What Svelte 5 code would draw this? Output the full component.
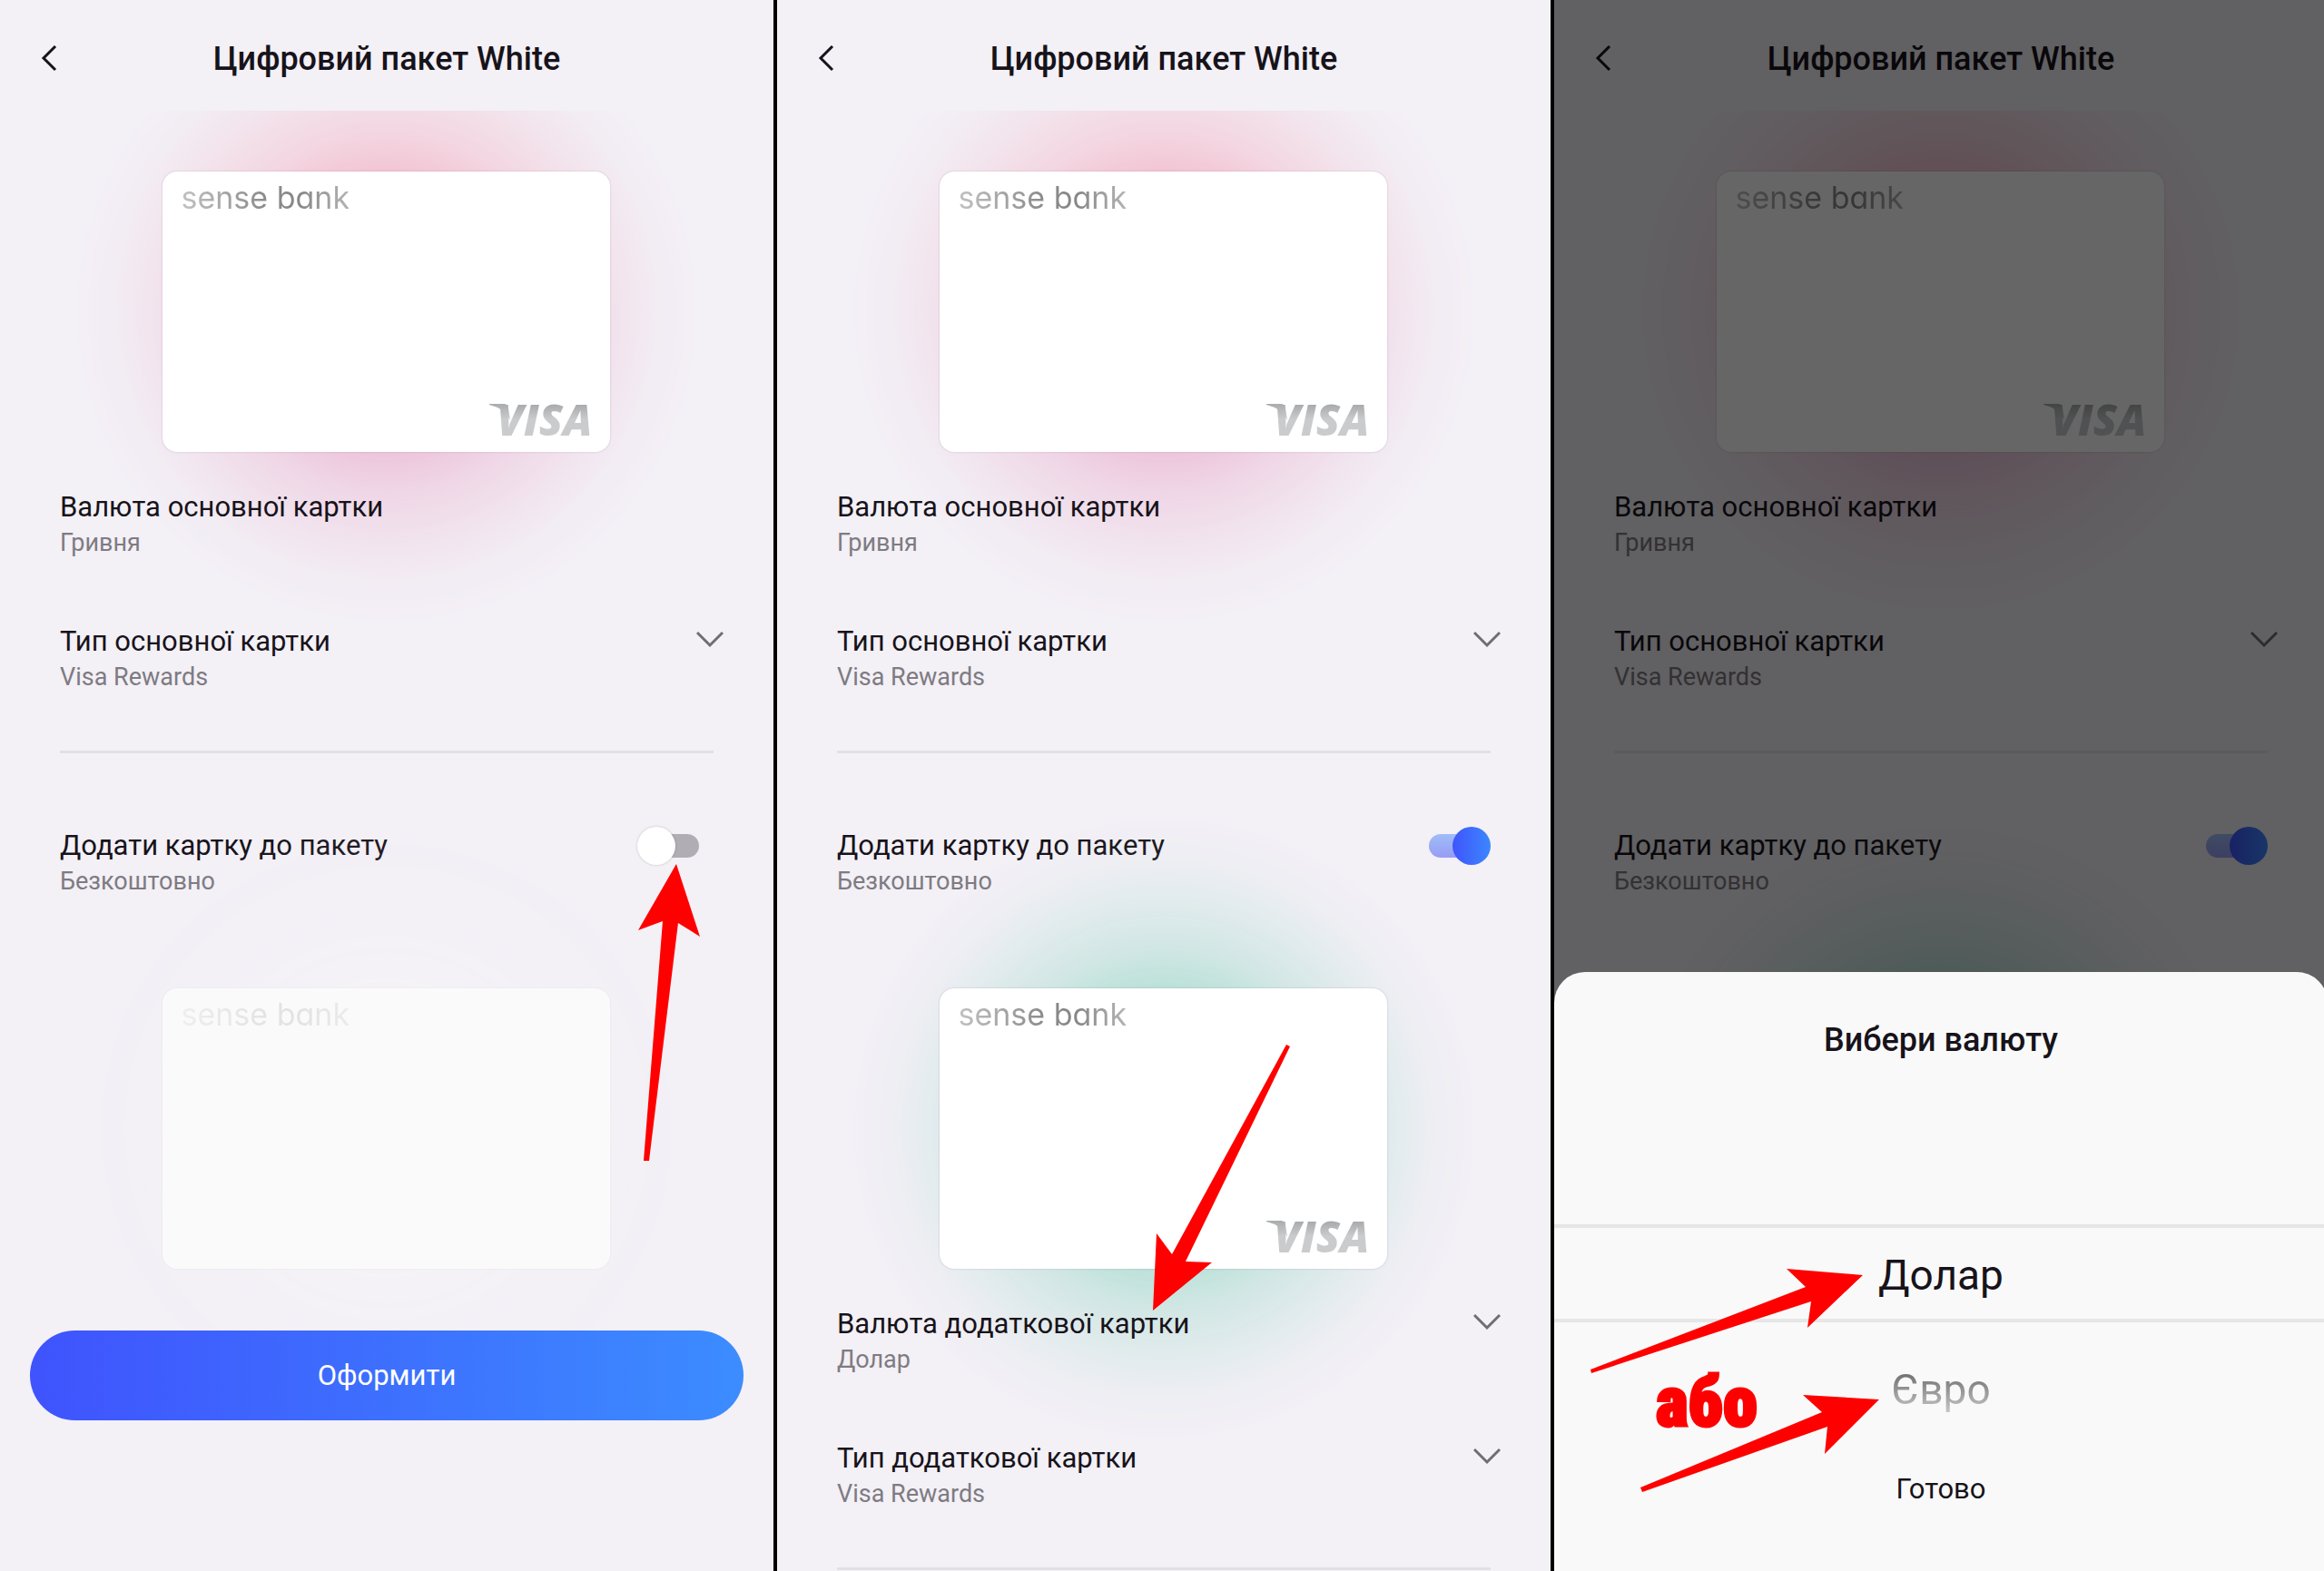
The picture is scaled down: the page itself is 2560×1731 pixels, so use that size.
<script>
  let panels = $state([
    { id: 'off', extra: false, sheet: false },
    { id: 'on', extra: true, sheet: false },
    { id: 'pick', extra: true, sheet: true }
  ]);

  const arrows = {
    off: ['745,952 771,1032 747,1017 715,1279 709,1279 730,1015 703,1025'],
    on: ['414,1444 418,1359 435,1382 561,1151 565,1153 450,1390 479,1391'],
    pick: [
      '340,1405 256,1398 277,1418 40,1509 41,1513 283,1434 279,1463',
      '358,1542 274,1537 295,1556 95,1639 97,1644 301,1572 298,1602'
    ]
  };
</script>

{#snippet bankCard(tone, disabled, covered)}
  <div class="stage">
    <div class="glow {tone}"></div>
    <div class="card" class:disabled>
      {#if !covered}
        <span class="brand">sense bank</span>
        {#if !disabled}
          <span class="visa">
            <svg class="wing" viewBox="0 0 24 20" aria-hidden="true">
              <path d="M0 0H16Q20 0 21 5L23 18Q17 5 0 1Z" fill="url(#silver)" />
            </svg>
            VISA
          </span>
        {/if}
      {/if}
    </div>
  </div>
{/snippet}

{#snippet choice(label, value)}
  <button class="row" type="button">
    <span class="text">
      <span class="label">{label}</span>
      <span class="value">{value}</span>
    </span>
    <svg class="chevron" viewBox="0 0 30 40" aria-hidden="true">
      <path d="M1 11L15 25L29 11" fill="none" stroke="currentColor" stroke-width="3" />
    </svg>
  </button>
{/snippet}

<svg class="defs" aria-hidden="true">
  <linearGradient id="silver" x1="0" y1="0" x2="0" y2="1">
    <stop offset="0" stop-color="#a9abad" />
    <stop offset="1" stop-color="#cdcfd1" />
  </linearGradient>
</svg>

<main class="page">
  {#each panels as panel (panel.id)}
    <section class="panel">
      <header class="top">
        <button class="back" type="button" aria-label="Назад">
          <svg viewBox="0 0 18 30" aria-hidden="true">
            <path d="M16 1L3 14L16 27" fill="none" stroke="currentColor" stroke-width="3" />
          </svg>
        </button>
        <h1>Цифровий пакет White</h1>
      </header>

      {@render bankCard('pink', false, false)}

      <div class="rows">
        <div class="row">
          <span class="text">
            <span class="label">Валюта основної картки</span>
            <span class="value">Гривня</span>
          </span>
        </div>
        {@render choice('Тип основної картки', 'Visa Rewards')}
      </div>
      <hr />
      <div class="row add">
        <label class="text" for="add-{panel.id}">
          <span class="label">Додати картку до пакету</span>
          <span class="value">Безкоштовно</span>
        </label>
        <input class="switch" id="add-{panel.id}" type="checkbox" bind:checked={panel.extra} />
      </div>

      <div class="second">
        {@render bankCard(panel.extra ? 'mint' : 'none', !panel.extra, panel.sheet)}
      </div>

      {#if panel.sheet}
        <div class="shade"></div>
        <div class="sheet" role="dialog" aria-labelledby="sheet-title">
          <h2 id="sheet-title">Вибери валюту</h2>
          <button class="option selected" type="button">Долар</button>
          <button class="option next" type="button">Євро</button>
          <button class="done" type="button">Готово</button>
        </div>
        <span class="or">або</span>
      {:else if panel.extra}
        <div class="rows">
          {@render choice('Валюта додаткової картки', 'Долар')}
          {@render choice('Тип додаткової картки', 'Visa Rewards')}
        </div>
        <hr />
      {:else}
        <button class="submit" type="button">Оформити</button>
      {/if}

      <svg class="arrows" viewBox="0 0 852 1731" aria-hidden="true">
        {#each arrows[panel.id] as points}
          <polygon {points} fill="#ff0000" />
        {/each}
      </svg>
    </section>
  {/each}
</main>

<style>
  :global(body) {
    margin: 0;
    background: #000;
  }
  .defs {
    position: absolute;
    width: 0;
    height: 0;
  }
  .page {
    display: grid;
    grid-template-columns: repeat(3, calc((100% - 4px) / 3));
    gap: 4px;
    min-height: 100vh;
    overflow: hidden;
    background: #000;
    font-family: Roboto, 'Noto Sans', sans-serif;
    color: #17131a;
  }
  .panel {
    position: relative;
    display: flex;
    flex-direction: column;
    overflow: hidden;
    background: #f3f0f6;
  }
  button {
    margin: 0;
    padding: 0;
    border: 0;
    background: none;
    font: inherit;
    color: inherit;
    cursor: pointer;
  }
  .top {
    position: relative;
    z-index: 1;
    display: grid;
    grid-template-columns: 63px 1fr 63px;
    align-items: center;
    height: 122px;
    padding: 8px 0 0;
    box-sizing: border-box;
    background: #f3f0f6;
  }
  .back {
    display: flex;
    justify-content: flex-end;
  }
  .back svg {
    width: 18px;
    height: 30px;
  }
  h1,
  h2 {
    margin: 0;
    font-size: 36px;
    line-height: 44px;
    font-weight: 500;
    text-align: center;
  }
  .stage {
    position: relative;
    display: flex;
    justify-content: center;
    padding: 67px 0 40px;
  }
  .second .stage {
    padding-top: 100px;
  }
  .glow {
    position: absolute;
    left: 50%;
    bottom: 40px;
    width: 720px;
    height: 720px;
    margin: 0 0 -205px -360px;
    mask-image: radial-gradient(
      circle,
      #000 0,
      rgb(0 0 0 / 0.9) 120px,
      rgb(0 0 0 / 0.75) 155px,
      rgb(0 0 0 / 0.45) 200px,
      rgb(0 0 0 / 0.24) 250px,
      rgb(0 0 0 / 0.06) 300px,
      transparent 345px
    );
    pointer-events: none;
  }
  .pink {
    background: linear-gradient(#f3b8c9 30%, #ebb7d3 70%);
  }
  .mint {
    background: #a9dccf;
  }
  .none {
    background: #f5f3f7;
  }
  .card {
    position: relative;
    display: flex;
    flex-direction: column;
    justify-content: space-between;
    width: 493px;
    height: 309px;
    padding: 9px 20px 10px;
    box-sizing: border-box;
    border-radius: 16px;
    background: #fff;
    box-shadow: 0 0 2px rgb(90 60 90 / 0.3);
  }
  .card.disabled {
    background: #fafafb;
    box-shadow: 0 0 2px rgb(90 60 90 / 0.1);
  }
  .brand {
    align-self: flex-start;
    font-family: Inter, Lato, sans-serif;
    font-feature-settings: 'cv11';
    font-size: 34px;
    line-height: 40px;
    font-weight: 400;
    background: linear-gradient(90deg, #c2c2c2, #8c8c8c 50%, #868686 70%, #b4b4b4);
    background-clip: text;
    color: transparent;
  }
  .disabled .brand {
    opacity: 0.2;
  }
  .visa {
    position: relative;
    align-self: flex-end;
    font-family: 'Open Sans', 'Noto Sans', sans-serif;
    font-size: 48px;
    line-height: 52px;
    font-weight: 800;
    font-style: italic;
    background: linear-gradient(#a9abad 20%, #c9cbcd 50%);
    background-clip: text;
    color: transparent;
  }
  .wing {
    position: absolute;
    left: -8px;
    top: 9px;
    width: 24px;
    height: 20px;
  }
  .rows {
    display: flex;
    flex-direction: column;
    gap: 70px;
  }
  .row {
    position: relative;
    display: flex;
    justify-content: space-between;
    align-items: flex-start;
    padding: 0 55px 0 66px;
    text-align: left;
  }
  .text {
    display: flex;
    flex-direction: column;
  }
  .label {
    font-size: 31px;
    line-height: 42px;
  }
  .value {
    font-size: 27px;
    line-height: 36px;
    color: #7e7b82;
  }
  .chevron {
    width: 30px;
    height: 40px;
    color: #6f6c73;
  }
  hr {
    width: auto;
    height: 3px;
    margin: 63px 66px 0;
    border: 0;
    background: #e2dfe5;
  }
  .add {
    margin-top: 81px;
    padding-right: 66px;
  }
  .switch {
    appearance: none;
    position: relative;
    display: flex;
    align-items: center;
    width: 84px;
    height: 42px;
    margin: 0;
    cursor: pointer;
  }
  .switch::before {
    content: '';
    width: 52px;
    height: 26px;
    margin: 0 16px;
    border-radius: 13px;
    background: #b0aeb4;
  }
  .switch::after {
    content: '';
    position: absolute;
    left: 0;
    top: 0;
    width: 42px;
    height: 42px;
    border-radius: 50%;
    background: #fff;
    box-shadow: 0 0 3px rgb(0 0 0 / 0.2);
  }
  .switch:checked::before {
    background: linear-gradient(#9fbcf8, #979df4);
  }
  .switch:checked::after {
    left: 42px;
    background: linear-gradient(90deg, #3f55fb, #3c86ff);
    box-shadow: none;
  }
  .submit {
    position: relative;
    height: 99px;
    margin: 28px 33px 0;
    border-radius: 50px;
    background: linear-gradient(90deg, #3f53fd, #3c8cff);
    font-size: 31px;
    line-height: 42px;
    color: #fff;
  }
  .shade {
    position: absolute;
    inset: 0;
    z-index: 2;
    background: rgb(0 0 0 / 0.6);
  }
  .sheet {
    position: absolute;
    left: 0;
    right: 0;
    bottom: 0;
    z-index: 3;
    display: flex;
    flex-direction: column;
    padding: 53px 0 69px;
    border-radius: 34px 34px 0 0;
    background: #f9f9f9;
  }
  .option {
    font-size: 46px;
    line-height: 60px;
  }
  .selected {
    margin-top: 181px;
    padding: 22px 0 18px;
    border: solid #e6e6e6;
    border-width: 4px 0;
  }
  .next {
    align-self: center;
    margin-top: 44px;
    background: linear-gradient(#707070 20%, #c4c4c4 90%);
    background-clip: text;
    color: transparent;
  }
  .done {
    align-self: center;
    margin-top: 59px;
    font-size: 31px;
    line-height: 42px;
  }
  .arrows {
    position: absolute;
    left: 0;
    top: 0;
    z-index: 4;
    width: 100%;
    pointer-events: none;
  }
  .or {
    position: absolute;
    left: 112px;
    bottom: 144px;
    z-index: 4;
    font-family: Impact, 'Roboto Condensed', 'Liberation Sans Narrow', Roboto, sans-serif;
    font-size: 76px;
    line-height: 84px;
    font-weight: 900;
    color: #ff0000;
    -webkit-text-stroke: 3px #ff0000;
  }
</style>
